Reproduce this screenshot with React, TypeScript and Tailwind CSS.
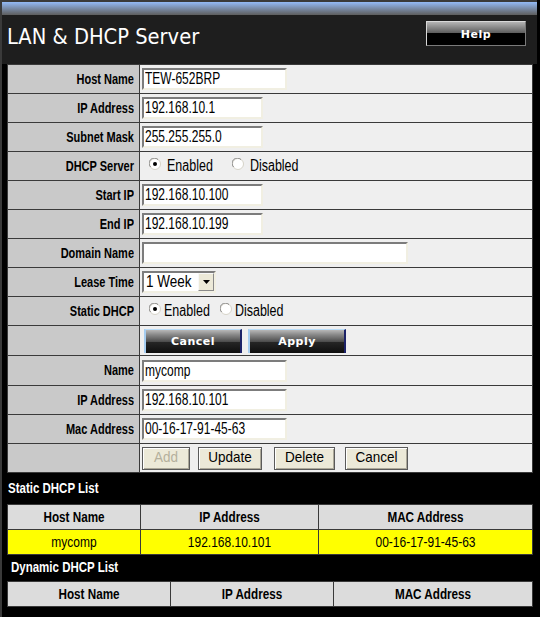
import React from "react";

const SANS = "font-['Liberation_Sans',Arial,sans-serif]";

// the original page is drawn with tall, narrow glyphs; stretch the text a bit
function Tall({ children, k = "scale-y-[1.28]" }: { children: React.ReactNode; k?: string }) {
  return <span className={`inline-block ${k}`}>{children}</span>;
}

function Radio({ checked }: { checked?: boolean }) {
  return (
    <svg width="12" height="12" viewBox="0 0 12 12" className="shrink-0 -mt-[4px]">
      <circle cx="6" cy="6" r="5.5" fill="#fff" stroke="#d6d3c8" />
      <path d="M1.6 9 A5 5 0 0 1 9 1.6" stroke="#8a8a8a" fill="none" strokeWidth="1" />
      {checked && <circle cx="6" cy="6" r="2" fill="#000" />}
    </svg>
  );
}

function TextBox({ value, width }: { value: string; width: string }) {
  return (
    <div
      className={`${width} h-[22px] bg-white border-t-2 border-l-2 border-t-[#7c7c7c] border-l-[#7c7c7c] border-b-2 border-r-2 border-b-[#f1efe2] border-r-[#f1efe2] flex items-center pl-[1px] text-[12px] text-black leading-none`}
    >
      <Tall k="scale-y-[1.3]">{value}</Tall>
    </div>
  );
}

function Row({
  label,
  tall,
  children
}: {
  label?: string;
  tall?: boolean;
  children?: React.ReactNode;
}) {
  return (
    <div className={`flex border-b border-[#3a3a3a] ${tall ? "h-[30px]" : "h-[29px]"}`}>
      <div className="w-[132px] shrink-0 border-r border-[#3a3a3a] bg-[#c9c9c9] flex items-center justify-end pr-[5px] text-[11px] font-bold text-black">
        {label && <Tall>{label}</Tall>}
      </div>
      <div className="flex-1 bg-[#efefef] flex items-center pl-[2px]">{children}</div>
    </div>
  );
}

function BlueButton({ text }: { text: string }) {
  return (
    <div className="w-[98px] h-[24px] pt-[2px] border-t border-l-2 border-t-[#b9dcf8] border-l-[#a6cdf0] border-r-2 border-r-[#1c2268] bg-[linear-gradient(to_bottom,#b8b8b8_0%,#8a8a8a_20%,#4e4e4e_50%,#262626_52%,#0e0e0e_100%)] flex items-center justify-center text-white text-[11px] font-bold tracking-[0.5px] font-['DejaVu_Sans',sans-serif]">
      {text}
    </div>
  );
}

function ClassicButton({
  text,
  width,
  disabled
}: {
  text: string;
  width: string;
  disabled?: boolean;
}) {
  return (
    <div
      className={`${width} h-[23px] bg-[#ece9d8] border border-[#5a5a5a] shadow-[inset_1px_1px_0_#ffffff,inset_-1px_-1px_0_#aca899] flex items-center justify-center text-[13.5px] ${
        disabled ? "text-[#b4b09d]" : "text-black"
      }`}
    >
      <Tall k="scale-y-[1.12]">{text}</Tall>
    </div>
  );
}

function ListHeaderCell({ text }: { text: string }) {
  return (
    <div className="h-[25px] border-r border-b border-[#3a3a3a] bg-[#dcdcdc] flex items-center justify-center text-[11.7px] font-bold text-black">
      <Tall k="scale-y-[1.25]">{text}</Tall>
    </div>
  );
}

function ListCell({ text }: { text: string }) {
  return (
    <div className="h-[25px] border-r border-b border-[#3a3a3a] bg-[#ffff00] flex items-center justify-center text-[12px] text-black">
      <Tall k="scale-y-[1.25]">{text}</Tall>
    </div>
  );
}

export default function App() {
  return (
    <div
      className={`w-[540px] h-[617px] bg-black border-l-2 border-[#3a3a3a] overflow-hidden flex flex-col ${SANS}`}
    >
      <div className="h-[15px] mr-[3px] border-t-2 border-[#3a3a3a] bg-linear-to-b from-[#93baf6] to-[#5e5e5e]" />
      <div className="h-[49px] mr-[3px] bg-[#1e1e1e] flex justify-between pl-[5px] pr-[11px] pt-[6px]">
        <h1 className="mt-[3px] text-[21.7px] leading-[25px] text-white font-['DejaVu_Sans_Condensed','DejaVu_Sans',sans-serif]">
          LAN &amp; DHCP Server
        </h1>
        <div className="w-[100px] h-[25px] pt-[3px] border-t border-l border-[#d8d8d8] border-r border-b border-r-[#7a7a7a] border-b-[#7a7a7a] bg-[linear-gradient(to_bottom,#b4b4b4_0%,#5c5c5c_48%,#000_50%,#000_100%)] flex items-center justify-center text-white text-[11px] font-bold tracking-[0.5px] font-['DejaVu_Sans',sans-serif]">
          Help
        </div>
      </div>

      <div className="ml-[5px] w-[526px] border-t border-l border-r border-[#3a3a3a]">
        <Row label="Host Name">
          <TextBox value="TEW-652BRP" width="w-[145px]" />
        </Row>
        <Row label="IP Address">
          <TextBox value="192.168.10.1" width="w-[121px]" />
        </Row>
        <Row label="Subnet Mask">
          <TextBox value="255.255.255.0" width="w-[121px]" />
        </Row>
        <Row label="DHCP Server">
          <div className="flex items-center pl-[7px] text-[12.5px] text-black">
            <Radio checked />
            <span className="ml-[6px]">
              <Tall k="scale-y-[1.25]">Enabled</Tall>
            </span>
            <span className="ml-[19px] flex">
              <Radio />
            </span>
            <span className="ml-[6px]">
              <Tall k="scale-y-[1.25]">Disabled</Tall>
            </span>
          </div>
        </Row>
        <Row label="Start IP">
          <TextBox value="192.168.10.100" width="w-[121px]" />
        </Row>
        <Row label="End IP">
          <TextBox value="192.168.10.199" width="w-[121px]" />
        </Row>
        <Row label="Domain Name">
          <TextBox value="" width="w-[266px]" />
        </Row>
        <Row label="Lease Time">
          <div className="w-[74px] h-[22px] bg-white border-t-2 border-l-2 border-t-[#7c7c7c] border-l-[#7c7c7c] border-b-2 border-r-2 border-b-[#f1efe2] border-r-[#f1efe2] flex items-center justify-between text-[13.5px] text-black">
            <span className="pl-[2px]">
              <Tall k="scale-y-[1.2]">1 Week</Tall>
            </span>
            <span className="w-[16px] h-[18px] bg-[#ece9d8] border border-[#f8f8f8] border-r-[#8a8a8a] border-b-[#8a8a8a] flex items-center justify-center">
              <svg width="7" height="4" viewBox="0 0 7 4">
                <path d="M0 0 H7 L3.5 4 Z" fill="#000" />
              </svg>
            </span>
          </div>
        </Row>
        <Row label="Static DHCP">
          <div className="flex items-center pl-[7px] text-[12.5px] text-black">
            <Radio checked />
            <span className="ml-[3px]">
              <Tall k="scale-y-[1.25]">Enabled</Tall>
            </span>
            <span className="ml-[10px] flex">
              <Radio />
            </span>
            <span className="ml-[3px]">
              <Tall k="scale-y-[1.25]">Disabled</Tall>
            </span>
          </div>
        </Row>
        <Row tall>
          <div className="flex gap-[6px] pl-[2px]">
            <BlueButton text="Cancel" />
            <BlueButton text="Apply" />
          </div>
        </Row>
        <Row label="Name" tall>
          <TextBox value="mycomp" width="w-[145px]" />
        </Row>
        <Row label="IP Address">
          <TextBox value="192.168.10.101" width="w-[145px]" />
        </Row>
        <Row label="Mac Address">
          <TextBox value="00-16-17-91-45-63" width="w-[145px]" />
        </Row>
        <Row>
          <div className="flex items-center">
            <ClassicButton text="Add" width="w-[48px]" disabled />
            <span className="ml-[8px]">
              <ClassicButton text="Update" width="w-[64px]" />
            </span>
            <span className="ml-[12px]">
              <ClassicButton text="Delete" width="w-[61px]" />
            </span>
            <span className="ml-[10px]">
              <ClassicButton text="Cancel" width="w-[63px]" />
            </span>
          </div>
        </Row>
      </div>

      <div className="h-[31px] flex items-center pl-[6px] text-white font-bold text-[11.5px]">
        <Tall k="scale-y-[1.25]">Static DHCP List</Tall>
      </div>
      <div className="ml-[5px] w-[526px] border-t border-l border-[#3a3a3a] grid grid-cols-[133px_178px_1fr]">
        <ListHeaderCell text="Host Name" />
        <ListHeaderCell text="IP Address" />
        <ListHeaderCell text="MAC Address" />
        <ListCell text="mycomp" />
        <ListCell text="192.168.10.101" />
        <ListCell text="00-16-17-91-45-63" />
      </div>

      <div className="h-[26px] flex items-center pl-[9px] text-white font-bold text-[11.5px]">
        <Tall k="scale-y-[1.25]">Dynamic DHCP List</Tall>
      </div>
      <div className="ml-[5px] w-[526px] border-t border-l border-[#3a3a3a] grid grid-cols-[163px_163px_1fr]">
        <ListHeaderCell text="Host Name" />
        <ListHeaderCell text="IP Address" />
        <ListHeaderCell text="MAC Address" />
      </div>
    </div>
  );
}
